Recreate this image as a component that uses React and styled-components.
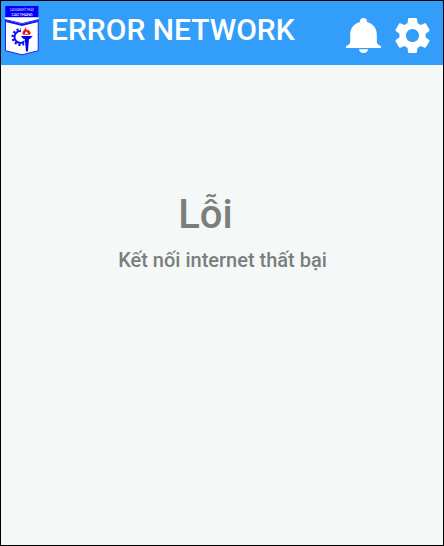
import React from "react";
import styled, { createGlobalStyle } from "styled-components";

const GlobalStyle = createGlobalStyle`
  * { box-sizing: border-box; }
  body { margin: 0; font-family: Roboto, sans-serif; }
`;

const Screen = styled.div`
  display: flex;
  flex-direction: column;
  width: 444px;
  height: 546px;
  border: 1px solid #000;
  background: #f4f8f7;
  overflow: hidden;
`;

const Header = styled.header`
  display: flex;
  align-items: flex-start;
  height: 64px;
  padding: 4px 13px 0 4px;
  background: #329ef9;
`;

const Logo = styled.svg`
  display: block;
  width: 34px;
  height: 51px;
  flex: none;
`;

const Title = styled.h1`
  margin: 7px 0 0 12px;
  flex: 1;
  font-size: 30px;
  line-height: 36px;
  font-weight: 500;
  color: #fff;
  white-space: nowrap;
`;

const Actions = styled.div`
  display: flex;
  gap: 14px;
  padding-top: 13px;
`;

const Icon = styled.svg`
  display: block;
  width: 35px;
  height: 35px;
  fill: #fff;
`;

const Message = styled.main`
  display: flex;
  flex-direction: column;
  align-items: center;
  padding-top: 126px;
  color: #7b7e7d;
  font-weight: 500;
`;

const Heading = styled.h2`
  margin: 0 33px 0 0;
  font-size: 40px;
  line-height: 48px;
  font-weight: 500;
`;

const Detail = styled.p`
  margin: 9px 0 0 1px;
  font-size: 20px;
  line-height: 24px;
`;

function SchoolLogo() {
  return (
    <Logo viewBox="0 0 34 51">
      <path d="M.5 14.5L17 18.5 33.2 14.5V45.7L17 49.8.5 45.7Z" fill="#fff" stroke="#1010f4" strokeWidth=".9" />
      <path d="M.2 12H33.5V14L17 18 .2 14Z" fill="#fff" />
      <path d="M.3 1H33.4V12.3H.3Z" fill="#0000fa" />
      <path d="M.8 15L17 19 33 15V17L17 21 .8 17Z" fill="#1010f4" />
      <text x="17" y="5.9" textAnchor="middle" fontSize="2.9" fill="#fff" fillOpacity=".85" textLength="24.5">CAO ĐẲNG KỸ THUẬT</text>
      <text x="17" y="10.8" textAnchor="middle" fontSize="4.2" fill="#fff" textLength="21">CAO THẮNG</text>
      <circle cx="15.5" cy="32" r="7.8" fill="none" stroke="#1010f4" strokeWidth="2.4" strokeDasharray="2.3 2.1" pathLength="52.8" clipPath="url(#gear-side)" />
      <circle cx="15.5" cy="32" r="6" fill="none" stroke="#1010f4" strokeWidth="2" clipPath="url(#gear-side)" />
      <path d="M15.7 31H27.7L25 34H24L22.9 46.5H21L19.8 34H18.5Z" fill="#0000f0" />
      <path d="M18 29.8C16.2 26.5 19.7 25.5 20.7 22.2C21.5 23.7 21.7 24.6 21.7 25.6L22.8 24.5C25.6 26.5 26.5 28 24.8 29.8Z" fill="#f21414" />
      <path d="M20 29C19.7 27.4 21 27.4 21.4 26.5C22.6 27.6 23 28.2 22.7 29Z" fill="#fff" />
      <clipPath id="gear-side"><path d="M5 20H16V28H14V34H19.5V42H5Z" /></clipPath>
    </Logo>
  );
}

export default function App() {
  return (
    <>
      <GlobalStyle />
      <Screen>
        <Header>
          <SchoolLogo />
          <Title>ERROR NETWORK</Title>
          <Actions>
            <Icon viewBox="0 0 35 35">
              <path d="M13 31.3H22C22 33.6 20.1 35 17.5 35S13 33.6 13 31.3ZM30.8 23.5V16.5C30.8 10.3 27 5.6 21 4.1V3C21 1.2 19.4 0 17.5 0S14 1.2 14 3V4.1C8 5.6 4.2 10.3 4.2 16.5V23.5C4.2 26 2.8 26.8 0 28.2V30H35V28.2C32.2 26.8 30.8 26 30.8 23.5Z" />
            </Icon>
            <Icon viewBox="2 2 20 20">
              <path d="M19.5 12.98c.04-.32.07-.64.07-.98s-.03-.66-.07-.98l2.11-1.65c.19-.15.24-.42.12-.64l-2-3.46c-.12-.22-.39-.3-.61-.22l-2.49 1c-.52-.4-1.08-.73-1.69-.98l-.38-2.65C14.46 2.18 14.25 2 14 2h-4c-.25 0-.46.18-.49.42l-.38 2.65c-.61.25-1.17.59-1.69.98l-2.49-1c-.23-.09-.49 0-.61.22l-2 3.46c-.13.22-.07.49.12.64l2.11 1.65c-.04.32-.07.65-.07.98s.03.66.07.98l-2.11 1.65c-.19.15-.24.42-.12.64l2 3.46c.12.22.39.3.61.22l2.49-1c.52.4 1.08.73 1.69.98l.38 2.65c.03.24.24.42.49.42h4c.25 0 .46-.18.49-.42l.38-2.65c.61-.25 1.17-.59 1.69-.98l2.49 1c.23.09.49 0 .61-.22l2-3.46c.12-.22.07-.49-.12-.64l-2.11-1.65zM12 15.75c-2.07 0-3.75-1.68-3.75-3.75s1.68-3.75 3.75-3.75 3.75 1.68 3.75 3.75-1.68 3.75-3.75 3.75z" />
            </Icon>
          </Actions>
        </Header>
        <Message>
          <Heading>Lỗi</Heading>
          <Detail>Kết nối internet thất bại</Detail>
        </Message>
      </Screen>
    </>
  );
}
